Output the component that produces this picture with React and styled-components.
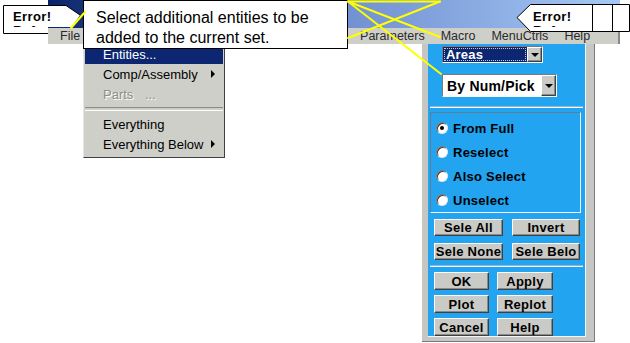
import React from "react";
import styled, { createGlobalStyle } from "styled-components";

const GlobalStyle = createGlobalStyle`
  html, body { margin: 0; padding: 0; background: #ffffff; }
  body { font-family: "Liberation Sans", Arial, sans-serif; }
  * { box-sizing: border-box; }
`;

const Canvas = styled.div`
  position: relative;
  width: 630px;
  height: 343px;
  overflow: hidden;
  background: #ffffff;
  font-family: "Liberation Sans", Arial, sans-serif;
  color: #000;
`;

/* ---------- application window (flow) ---------- */
const AppWindow = styled.div`
  margin-left: 48px;
  width: 572px;
  display: flex;
  flex-direction: column;
`;

const TitleBar = styled.div`
  height: 28px;
  background: linear-gradient(90deg, #0a246a 0%, #6e8ed0 50%, #a6c8f4 100%);
`;

const MenuBar = styled.div`
  height: 16px;
  display: flex;
  align-items: center;
  gap: 16px;
  padding-left: 12px;
  background: #cfcfc9;
  font-size: 12.5px;
  color: #2a2a2a;
  border-right: 2px solid #8a8a86;
`;

const MenuLabel = styled.span`
  white-space: nowrap;
`;

const Body = styled.div`
  display: flex;
  padding-left: 374px;
`;

const Dialog = styled.div`
  width: 173px;
  height: 298px;
  padding: 0 8px 4px 6px;
  background: #c6c6c2;
  border-right: 1px solid #7a7a78;
  border-bottom: 1px solid #7a7a78;
  display: flex;
`;

const Face = styled.div`
  flex: 1;
  background: #22a4f0;
  border-right: 1px solid #f2f8ff;
  border-bottom: 1px solid #f2f8ff;
  display: flex;
  flex-direction: column;
`;

const Combo = styled.div`
  margin: ${(p) => p.$top}px 0 0 14px;
  width: ${(p) => p.$w}px;
  height: ${(p) => p.$h}px;
  display: flex;
  border: 1px solid;
  border-color: #7a7a7a #ffffff #ffffff #7a7a7a;
  background: ${(p) => (p.$selected ? "#0c2672" : "#ffffff")};
`;

const ComboText = styled.div`
  flex: 1;
  display: flex;
  align-items: center;
  padding-left: ${(p) => (p.$selected ? 2 : 3)}px;
  margin: 1px;
  font-weight: bold;
  font-size: ${(p) => p.$size}px;
  letter-spacing: 0.2px;
  color: ${(p) => (p.$selected ? "#ffffff" : "#000000")};
  outline: ${(p) => (p.$selected ? "1px dotted #c8c8c8" : "none")};
  outline-offset: -1px;
`;

const ComboButton = styled.div`
  width: 15px;
  display: flex;
  align-items: center;
  justify-content: center;
  background: #cacac6;
  border: 1px solid;
  border-color: #ffffff #404040 #404040 #ffffff;
  box-shadow: inset -1px -1px #8a8a8a;
  &::after {
    content: "";
    border-left: 4px solid transparent;
    border-right: 4px solid transparent;
    border-top: 4px solid #000;
    margin-top: 1px;
  }
`;

const Divider = styled.div`
  margin: ${(p) => p.$top}px 2px 0 2px;
  height: 2px;
  border-top: 1px solid #8cb4d4;
  border-bottom: 1px solid #ffffff;
`;

const GroupBox = styled.div`
  margin: 4px 4px 0 2px;
  height: 101px;
  border: 1px solid;
  border-color: #5c7d94 #f4f8fc #f4f8fc #5c7d94;
  padding: 3px 0 0 5px;
  display: flex;
  flex-direction: column;
`;

const RadioRow = styled.div`
  height: 24px;
  display: flex;
  align-items: center;
  gap: 5px;
  font-weight: bold;
  font-size: 13px;
  letter-spacing: 0.25px;
`;

const RadioDot = styled.span`
  width: 12px;
  height: 12px;
  border-radius: 50%;
  background: #ffffff;
  border: 1px solid;
  border-color: #7a7a7a #e8e8e8 #e8e8e8 #7a7a7a;
  box-shadow: inset 1px 1px #3a3a3a;
  display: flex;
  align-items: center;
  justify-content: center;
  &::after {
    content: "";
    width: 4px;
    height: 4px;
    border-radius: 50%;
    background: ${(p) => (p.$checked ? "#000" : "transparent")};
  }
`;

const ButtonGrid = styled.div`
  display: grid;
  grid-template-columns: ${(p) => p.$cols};
  column-gap: ${(p) => p.$gap}px;
  row-gap: ${(p) => p.$rowGap}px;
  margin: ${(p) => p.$top}px 0 0 6px;
`;

const PanelButton = styled.div`
  height: ${(p) => p.$h}px;
  display: flex;
  align-items: center;
  justify-content: center;
  background: #cacac6;
  border: 1px solid;
  border-color: #ffffff #404040 #404040 #ffffff;
  box-shadow: inset -1px -1px #8a8a8a;
  font-weight: bold;
  font-size: 13px;
  letter-spacing: 0.3px;
  white-space: nowrap;
`;

/* ---------- overlays ---------- */
const DropMenu = styled.div`
  position: absolute;
  left: 83px;
  top: 43px;
  width: 142px;
  padding: 0 1px 3px 1px;
  background: #cfcfc9;
  border: 1px solid;
  border-color: #e6e6e2 #404040 #404040 #e6e6e2;
  font-size: 13px;
  z-index: 1;
`;

const MenuEntry = styled.div`
  height: 20px;
  display: flex;
  align-items: center;
  padding: 0 8px 0 18px;
  white-space: nowrap;
  background: ${(p) => (p.$active ? "#0c2672" : "transparent")};
  color: ${(p) => (p.$active ? "#ffffff" : p.$disabled ? "#8e8e8a" : "#000000")};
  text-shadow: ${(p) => (p.$disabled ? "1px 1px 0 #ffffff" : "none")};
`;

const EntryName = styled.span`
  min-width: 42px;
`;

const SubArrow = styled.span`
  margin-left: auto;
  border-left: 4px solid #000;
  border-top: 4px solid transparent;
  border-bottom: 4px solid transparent;
`;

const MenuSeparator = styled.div`
  height: 10px;
  display: flex;
  align-items: center;
  &::after {
    content: "";
    flex: 1;
    height: 2px;
    border-top: 1px solid #8a8a86;
    border-bottom: 1px solid #ffffff;
  }
`;

const Tooltip = styled.div`
  position: absolute;
  left: 83px;
  top: 0;
  width: 265px;
  height: 49px;
  padding: 7px 0 0 12px;
  background: #ffffff;
  border: 1px solid #000;
  font-size: 16px;
  line-height: 20px;
  z-index: 2;
`;

const Drawing = styled.svg`
  position: absolute;
  left: 0;
  top: 0;
  width: 630px;
  height: 343px;
  pointer-events: none;
  z-index: ${(p) => p.$z};
`;

const CalloutText = styled.div`
  position: absolute;
  left: ${(p) => p.$x}px;
  top: 10px;
  width: ${(p) => p.$w}px;
  height: 16.5px;
  overflow: hidden;
  font-weight: bold;
  font-size: 13px;
  line-height: 14px;
  letter-spacing: 0.4px;
  white-space: nowrap;
  z-index: 4;
`;

const menus = ["File", "Select", "List", "Plot", "PlotCtrls", "WorkPlane", "Parameters", "Macro", "MenuCtrls", "Help"];
const radios = ["From Full", "Reselect", "Also Select", "Unselect"];

export default function App() {
  return (
    <>
      <GlobalStyle />
      <Canvas>
        <AppWindow>
          <TitleBar />
          <MenuBar>
            {menus.map((m) => (
              <MenuLabel key={m}>{m}</MenuLabel>
            ))}
          </MenuBar>
          <Body>
            <Dialog>
              <Face>
                <Combo $top={2} $w={101} $h={17} $selected>
                  <ComboText $selected $size={13}>Areas</ComboText>
                  <ComboButton />
                </Combo>
                <Combo $top={11} $w={115} $h={23}>
                  <ComboText $size={14}>By Num/Pick</ComboText>
                  <ComboButton />
                </Combo>
                <Divider $top={9} />
                <GroupBox>
                  {radios.map((r, i) => (
                    <RadioRow key={r}>
                      <RadioDot $checked={i === 0} />
                      {r}
                    </RadioRow>
                  ))}
                </GroupBox>
                <ButtonGrid $cols="69px 68px" $gap={9} $rowGap={7} $top={6}>
                  <PanelButton $h={17}>Sele All</PanelButton>
                  <PanelButton $h={17}>Invert</PanelButton>
                  <PanelButton $h={17}>Sele None</PanelButton>
                  <PanelButton $h={17}>Sele Belo</PanelButton>
                </ButtonGrid>
                <Divider $top={5} />
                <ButtonGrid $cols="55px 56px" $gap={8} $rowGap={5} $top={5}>
                  <PanelButton $h={18}>OK</PanelButton>
                  <PanelButton $h={18}>Apply</PanelButton>
                  <PanelButton $h={18}>Plot</PanelButton>
                  <PanelButton $h={18}>Replot</PanelButton>
                  <PanelButton $h={18}>Cancel</PanelButton>
                  <PanelButton $h={18}>Help</PanelButton>
                </ButtonGrid>
              </Face>
            </Dialog>
          </Body>
        </AppWindow>

        <DropMenu>
          <MenuEntry $active>
            <EntryName>Entities</EntryName>...
          </MenuEntry>
          <MenuEntry>
            Comp/Assembly
            <SubArrow />
          </MenuEntry>
          <MenuEntry $disabled>
            <EntryName>Parts</EntryName>...
          </MenuEntry>
          <MenuSeparator />
          <MenuEntry>Everything</MenuEntry>
          <MenuEntry>
            Everything Below
            <SubArrow />
          </MenuEntry>
        </DropMenu>

        <Tooltip>
          Select additional entities to be
          <br />
          added to the current set.
        </Tooltip>

        <Drawing $z={3} viewBox="0 0 630 343">
          <polygon points="3.5,5.5 66,5.5 80,15 72,27 48,27 48,33.5 3.5,33.5" fill="#fff" />
          <polyline points="48,33.5 3.5,33.5 3.5,5.5 66,5.5 80,15" fill="none" stroke="#000" strokeWidth="1" />
          <polygon points="517,17.5 530.5,4.5 629.5,4.5 629.5,31.5 530.5,31.5" fill="#fff" stroke="#000" strokeWidth="1" />
          <line x1="592.5" y1="4.5" x2="592.5" y2="31.5" stroke="#000" strokeWidth="1" />
          <line x1="612.5" y1="4.5" x2="612.5" y2="31.5" stroke="#000" strokeWidth="1" />
        </Drawing>

        <CalloutText $x={13} $w={50}>
          Error!
          <br />
          Reference source not found.
        </CalloutText>
        <CalloutText $x={533} $w={56}>
          Error!
          <br />
          Reference source not found.
        </CalloutText>

        <Drawing $z={5} viewBox="0 0 630 343">
          <g stroke="#ffff00" strokeWidth="2" strokeLinecap="round">
            <line x1="71" y1="28" x2="85" y2="12" />
            <line x1="348" y1="1.5" x2="440" y2="1.5" />
            <line x1="348" y1="1.5" x2="440" y2="37" />
            <line x1="348" y1="38" x2="440" y2="1.5" />
            <line x1="348" y1="1.5" x2="441" y2="74" />
          </g>
        </Drawing>
      </Canvas>
    </>
  );
}
